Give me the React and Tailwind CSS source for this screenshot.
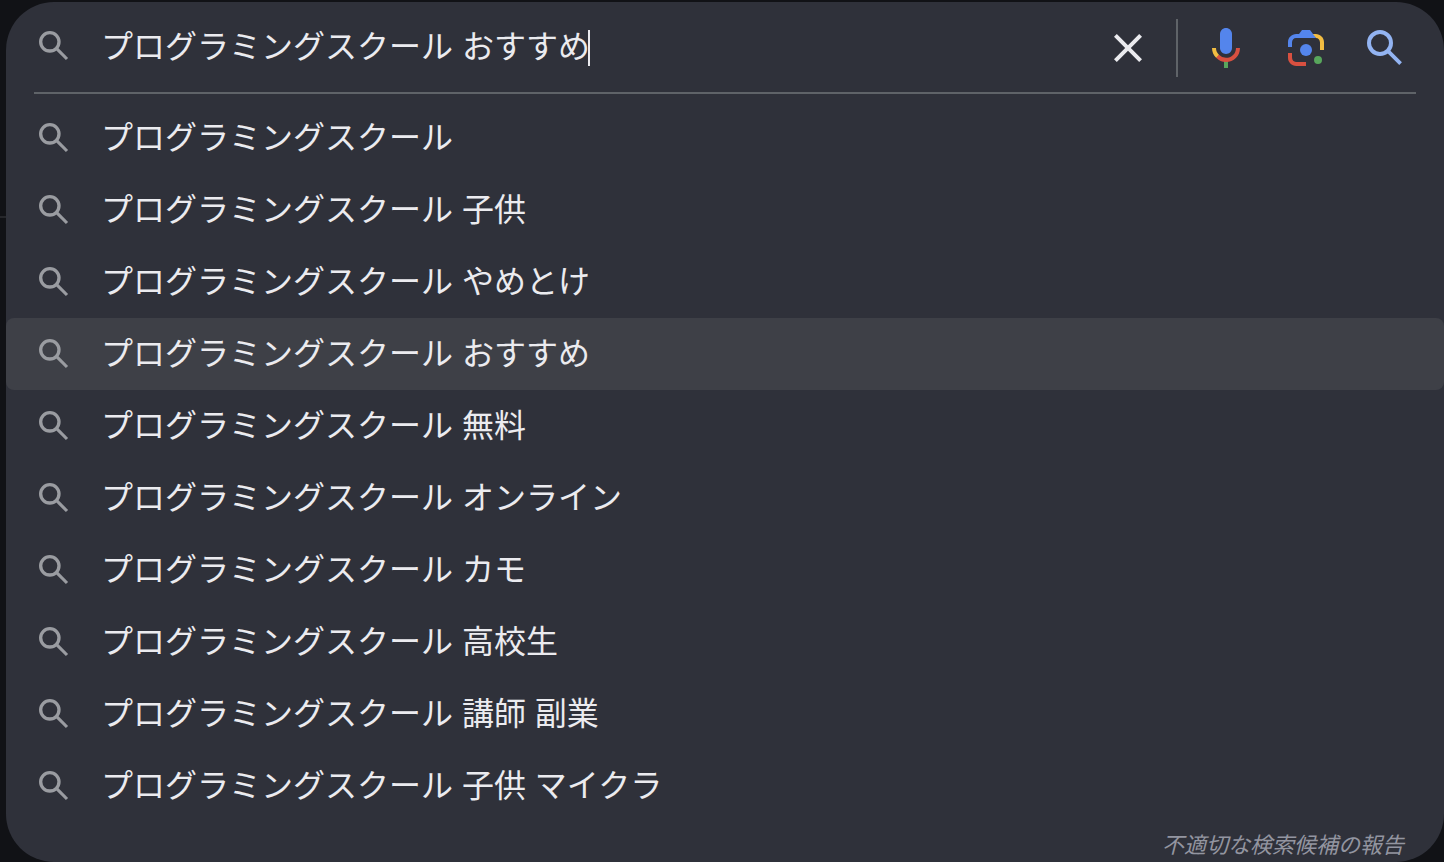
import React, { useState } from 'react';

const SUGGESTIONS = [
    'プログラミングスクール',
    'プログラミングスクール 子供',
    'プログラミングスクール やめとけ',
    'プログラミングスクール おすすめ',
    'プログラミングスクール 無料',
    'プログラミングスクール オンライン',
    'プログラミングスクール カモ',
    'プログラミングスクール 高校生',
    'プログラミングスクール 講師 副業',
    'プログラミングスクール 子供 マイクラ',
];

const SearchIcon = ({ className }) => (
    <svg className={className} viewBox="0 0 24 24" fill="none" stroke="currentColor" aria-hidden="true">
        <circle cx="9.5" cy="9.5" r="5.5" strokeWidth="2" />
        <path d="M13.3 13.3L19.8 19.8" strokeWidth="1.9" />
    </svg>
);

const ClearIcon = () => (
    <svg className="size-12" viewBox="0 0 24 24" fill="currentColor" aria-hidden="true">
        <path d="M19 6.41L17.59 5 12 10.59 6.41 5 5 6.41 10.59 12 5 17.59 6.41 19 12 13.41 17.59 19 19 17.59 13.41 12z" />
    </svg>
);

const MicIcon = () => (
    <svg className="size-12" viewBox="0 0 24 24" aria-hidden="true">
        <path fill="#5485ec" d="m12 15c1.66 0 3-1.31 3-2.97v-7.02c0-1.66-1.34-3.01-3-3.01s-3 1.34-3 3.01v7.02c0 1.66 1.34 2.97 3 2.97z" />
        <path fill="#58a65c" d="m11 18.08h2v3.92h-2z" />
        <path fill="#f2bd42" d="m7.05 16.87c-1.27-1.33-2.05-2.83-2.05-4.87h2c0 1.45 0.56 2.42 1.47 3.38v0.32l-1.15 1.18z" />
        <path fill="#d85040" d="m12 16.93a4.97 5.25 0 0 1 -3.54 -1.55l-1.41 1.49c1.26 1.34 3.02 2.13 4.95 2.13 3.87 0 6.99-2.92 6.99-7h-1.99c0 2.92-2.24 4.93-5 4.93z" />
    </svg>
);

const LensIcon = () => (
    <svg className="size-12" viewBox="0 0 192 192" aria-hidden="true">
        <circle fill="#58a65c" cx="144.07" cy="144" r="16" />
        <circle fill="#5485ec" cx="96.07" cy="104" r="24" />
        <path fill="#d85040" d="M24,135.2c0,18.11,14.69,32.8,32.8,32.8H96v-16l-40.1-0.1c-8.8,0-15.9-8.19-15.9-17.9v-18H24V135.2z" />
        <path fill="#f2bd42" d="M168,72.8c0-18.11-14.69-32.8-32.8-32.8H116l20,16c8.8,0,16,8.29,16,18v30h16V72.8z" />
        <path fill="#5485ec" d="M112,24l-32,0L68,40H56.8C38.69,40,24,54.69,24,72.8V92h16V74c0-9.71,7.2-18,16-18h80L124,40L112,24z" />
    </svg>
);

const App = () => {
    const [query, setQuery] = useState('プログラミングスクール おすすめ');
    const [active, setActive] = useState(3);

    const handleSubmit = (e) => {
        e.preventDefault();
    };

    const handleSelect = (text, index) => {
        setQuery(text);
        setActive(index);
    };

    return (
        <div className="flex min-h-screen bg-[#111216] pt-0.5 text-[#ebebef] font-['Liberation_Sans','Noto_Sans_CJK_JP',sans-serif]">
            {/* Page edge behind the panel */}
            <div className="w-1.5 shrink-0 pt-[214px]">
                <div className="h-0.5 bg-[#26272b]" />
            </div>

            <main className="flex min-w-0 flex-1 flex-col rounded-[48px] bg-[#2f313a]">
                <form onSubmit={handleSubmit} role="search" className="mx-7 flex h-[92px] items-center border-b-2 border-[#5f6368]">
                    <SearchIcon className="mb-0.5 size-10 shrink-0 text-[#9a9ca1]" />
                    <div className="ml-[27px] flex min-w-0 flex-1 items-center overflow-hidden">
                        <input
                            type="text"
                            aria-label="検索"
                            value={query}
                            onChange={e => setQuery(e.target.value)}
                            className="h-12 min-w-0 max-w-full field-sizing-content bg-transparent text-[32px] leading-[48px] caret-transparent outline-none"
                        />
                        {/* The input is as wide as its text, so this sits at the end of it */}
                        <span aria-hidden="true" className="-ml-0.5 mt-0.5 h-9 w-0.5 shrink-0 bg-[#ebebef]" />
                    </div>
                    <div className="flex items-center pt-0.5">
                        <button type="button" aria-label="クリア" onClick={() => setQuery('')}>
                            <ClearIcon />
                        </button>
                        <div className="ml-6 h-[58px] w-0.5 bg-[#5f6368]" />
                        <button type="button" aria-label="音声で検索" className="ml-6">
                            <MicIcon />
                        </button>
                        <button type="button" aria-label="画像で検索" className="ml-8">
                            <LensIcon />
                        </button>
                        <button type="submit" aria-label="Google 検索" className="ml-[31px] mr-[7px] text-[#93b4f2]">
                            <SearchIcon className="size-12" />
                        </button>
                    </div>
                </form>

                <ul className="pt-2">
                    {SUGGESTIONS.map((text, index) => (
                        <li key={text}>
                            <button
                                type="button"
                                onClick={() => handleSelect(text, index)}
                                className={`flex h-[72px] w-full items-center rounded-lg px-7 text-left text-[32px] leading-[48px] ${index === active ? 'bg-[#3e4047]' : ''}`}
                            >
                                <SearchIcon className="size-10 shrink-0 text-[#9a9ca1]" />
                                <span className="ml-[27px] truncate">{text}</span>
                            </button>
                        </li>
                    ))}
                </ul>

                <footer className="flex justify-end px-10 pb-1 pt-3">
                    <a href="#report" className="text-[22px] italic leading-6 text-[#9395a0]">不適切な検索候補の報告</a>
                </footer>
            </main>
        </div>
    );
};

export default App;
